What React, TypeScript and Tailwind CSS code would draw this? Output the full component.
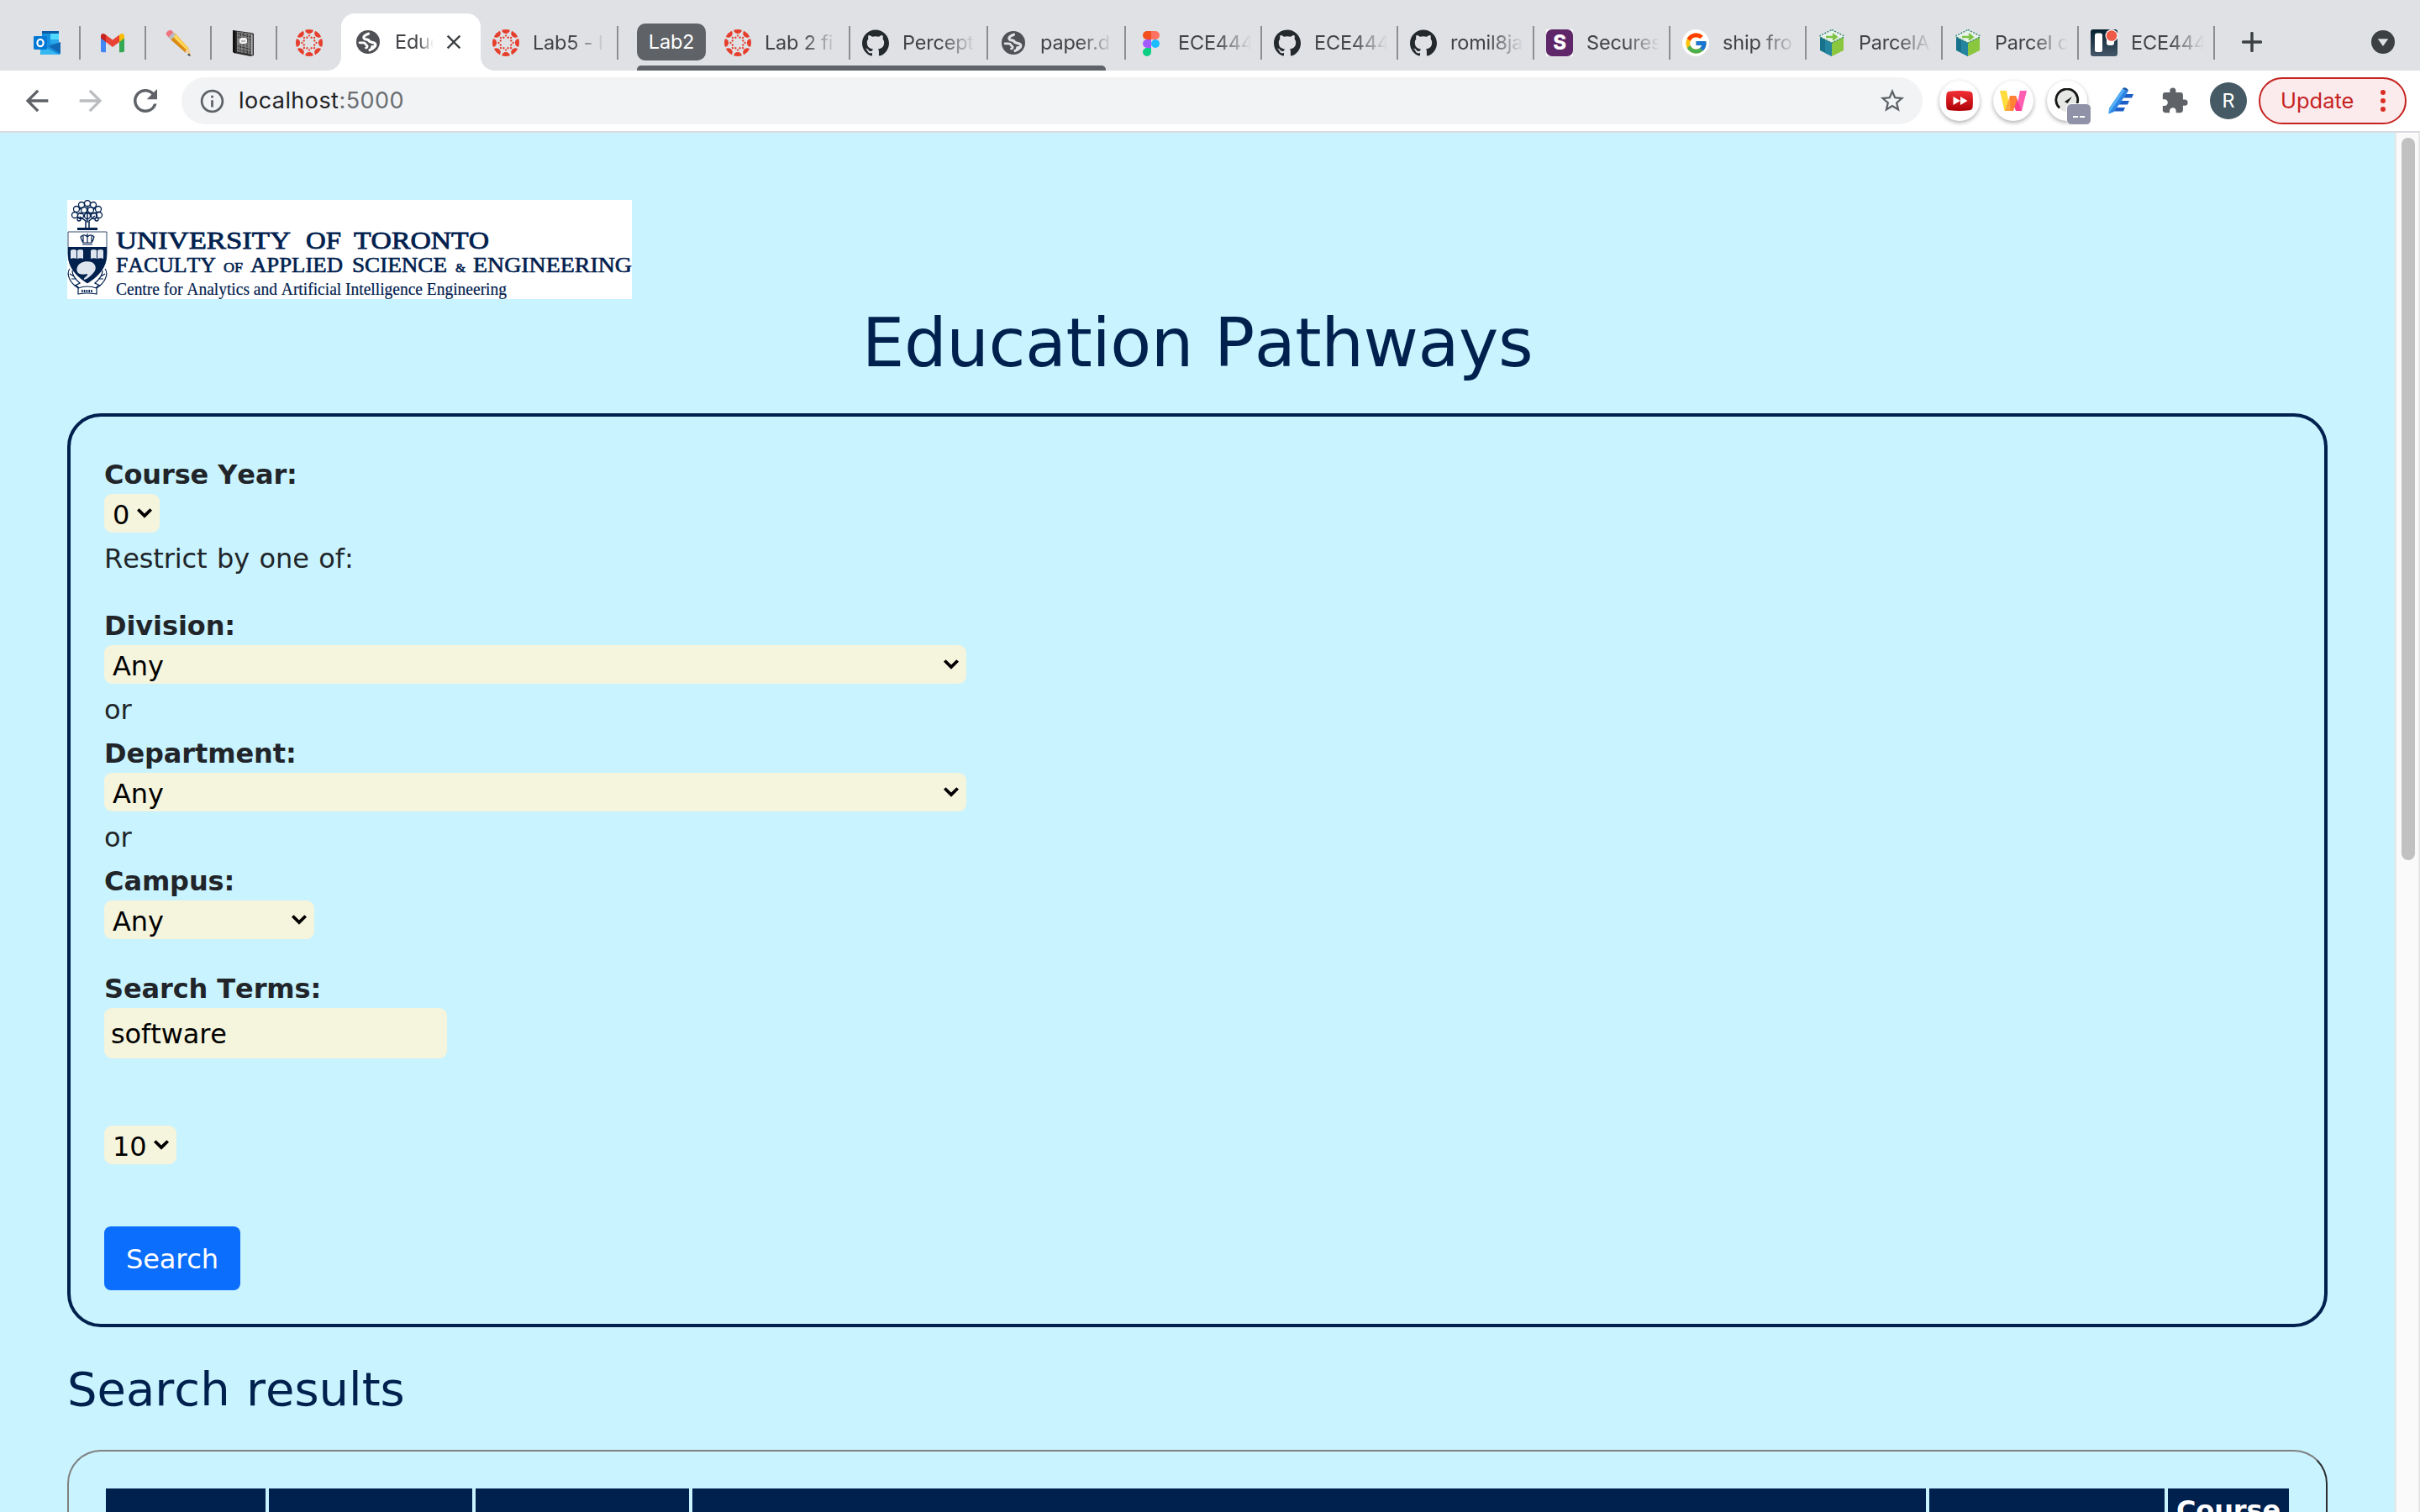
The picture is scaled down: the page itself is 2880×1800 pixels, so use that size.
import React from "react";
import {
  MdArrowBack,
  MdArrowForward,
  MdRefresh,
  MdInfoOutline,
  MdStarOutline,
  MdExtension,
  MdClose,
} from "react-icons/md";
import { SiGithub } from "react-icons/si";
import { FcGoogle } from "react-icons/fc";

const NAVY = "#00204e";

function OutlookIcon() {
  return (
    <svg viewBox="0 0 32 32" className="size-8">
      <rect x="10" y="2" width="20" height="4" fill="#0a5aa8" />
      <rect x="10" y="5" width="10" height="13" fill="#1490df" />
      <rect x="20" y="5" width="10" height="8" fill="#50d9ff" />
      <rect x="20" y="12" width="10" height="8" fill="#28a8ea" />
      <path d="M8 30V17h24v11a2 2 0 0 1-2 2z" fill="#1b8fdb" />
      <path d="M32 15v14L18 20z" fill="#1168b4" />
      <path d="M8 18l22 12H10a2 2 0 0 1-2-2z" fill="#35b8f1" />
      <rect x="0" y="8" width="16" height="16" rx="1.4" fill="#0078d4" />
      <ellipse cx="8" cy="16" rx="3.6" ry="4.2" fill="none" stroke="#fff" strokeWidth="2.2" />
    </svg>
  );
}

function GmailIcon() {
  return (
    <svg viewBox="0 0 32 32" className="size-8">
      <path d="M2 9v16.5A1.8 1.8 0 0 0 3.800 27.300H8V13z" fill="#4285f4" />
      <path d="M24 13v14.300h4.200a1.800 1.800 0 0 0 1.800-1.800V9z" fill="#34a853" />
      <path d="M24 7v8l6-4.500V8c0-3-3-4-5-2.200z" fill="#fbbc04" />
      <path d="M8 15V6.500l8 6 8-6V15l-8 6z" fill="#ea4335" />
      <path d="M2 8v2.500L8 15V6.500L7 5.800C5 4 2 5 2 8z" fill="#c5221f" />
    </svg>
  );
}

function PencilIcon() {
  return (
    <svg viewBox="0 0 32 32" className="size-8">
      <path d="M7 9l5-5 17 19-3 4z" fill="#f5b32a" />
      <path d="M9 8l3-3 16 18-2 1z" fill="#ffd75a" />
      <path d="M5 9l2 3 18 16 1-3L8 7z" fill="#d98b16" />
      <path d="M24 26l5-4 2.500 9.500z" fill="#f3cf9c" />
      <path d="M29 28.500l2 3.500-4-1.500z" fill="#333" />
      <path d="M4.500 9.500l5.500-6 3 3-5.500 6z" fill="#b9bec4" />
      <path d="M1.500 5.500C2 2 5 .5 8 1l2.500 2.500-6 6z" fill="#ee7480" />
    </svg>
  );
}

function NotebookIcon() {
  return (
    <svg viewBox="0 0 32 32" className="size-8">
      <path d="M3 1l22 3 3 1v26l-4 1-20-4z" fill="#2a2a2a" />
      <path d="M8 2.500L26 5v25L8 26.500z" fill="#808080" />
      <path
        d="M9 5l16 4M9 9l16 4M9 20l16 4M9 24l16 4M12 4v23M16 4v24M20 5v24M24 6v23"
        stroke="#303030"
        strokeWidth="1.300"
        strokeDasharray="1.500 1.300"
      />
      <rect x="11" y="10" width="9" height="7" rx="2.500" fill="#f4f4f4" />
      <path d="M13 14h5" stroke="#777" />
      <path d="M3 1v26l3 1.500V2z" fill="#111" />
      <path d="M26 30.500V6" stroke="#ddd" strokeWidth="1" />
    </svg>
  );
}

const CANVAS_ANGLES = [0, 45, 90, 135, 180, 225, 270, 315];

function CanvasIcon() {
  return (
    <svg viewBox="0 0 32 32" className="size-8">
      {CANVAS_ANGLES.map((a) => (
        <g key={a} transform={`rotate(${a} 16 16)`} fill="#e63e2c">
          <path d="M11.200 .8a16 16 0 0 1 9.600 0a4.800 4.300 0 0 1-9.600 0z" />
          <circle cx="16" cy="7.400" r="1.150" />
        </g>
      ))}
      {CANVAS_ANGLES.map((a) => (
        <circle key={a} cx="16" cy="9.200" r="1.200" fill="#e63e2c" transform={`rotate(${a + 22.5} 16 16)`} />
      ))}
    </svg>
  );
}

function GlobeIcon({ hole }: { hole: string }) {
  return (
    <svg viewBox="0 0 32 32" className="size-8">
      <circle cx="16" cy="16" r="14" fill="#505156" />
      <g fill="none" stroke={hole} strokeLinecap="round" strokeLinejoin="round">
        <path d="M16.500 6.200C13 7.500 9.500 9.500 11.500 12c1.200 1.300 3.500.6 5 1.800" strokeWidth="3.200" />
        <path d="M16.500 13.800c.8 2.400 3.800 2.500 6.500 3.200 2 .8 2.500 2.500 1 4.500-1.500 1.800-3.500 3.300-6 4" strokeWidth="3.200" />
        <path d="M6 16.800h4.500c2.600 0 2.300 2.400 4 3.200 1.200.8.800 2.500-1 3" strokeWidth="2.800" />
      </g>
      <path d="M18 26.500l1.500-6 5-1-1.500 4.500z" fill={hole} />
    </svg>
  );
}

function FigmaIcon() {
  return (
    <svg viewBox="0 0 32 32" className="size-8">
      <path d="M11 2h5v10h-5a5 5 0 0 1 0-10z" fill="#f24e1e" />
      <path d="M16 2h5a5 5 0 0 1 0 10h-5z" fill="#ff7262" />
      <path d="M11 12h5v10h-5a5 5 0 0 1 0-10z" fill="#a259ff" />
      <circle cx="21" cy="17" r="5" fill="#1abcfe" />
      <path d="M11 22h5v5a5 5 0 1 1-5-5z" fill="#0acf83" />
    </svg>
  );
}

function GithubIcon() {
  return <SiGithub className="size-8 text-[#24292e]" />;
}

function SecureIcon() {
  return (
    <span className="flex size-8 bg-white">
      <span className="flex size-8 items-center justify-center rounded-[7px] bg-[#5f2769] font-['Inter'] text-[24px] font-extrabold leading-none text-white">
        S
      </span>
    </span>
  );
}

function GoogleIcon() {
  return (
    <span className="flex size-8 items-center justify-center rounded-full bg-white">
      <FcGoogle className="size-[29px]" />
    </span>
  );
}

function ParcelIcon() {
  return (
    <svg viewBox="0 0 32 32" className="size-8">
      <path d="M2 8l14 7v17L2 25z" fill="#17728c" />
      <path d="M8 11l8 4v17l-8-4z" fill="#2584a0" />
      <path d="M30 8l-14 7v17l14-7z" fill="#8bc63f" />
      <path d="M16 .5L30 7.500v1.500L16 16 2 9V7.500z" fill="#e9f2ea" stroke="#2b7f6d" strokeWidth="1.300" strokeDasharray="2 1.500" />
      <path d="M9 9h11M17 5.500l4.500 3.500-4.500 3.500" stroke="#7cc242" strokeWidth="2.400" fill="none" />
    </svg>
  );
}

function TrelloIcon() {
  return (
    <svg viewBox="0 0 32 32" className="size-8">
      <defs>
        <linearGradient id="board" x1="0" y1="0" x2="0" y2="1">
          <stop offset="0" stopColor="#06202f" />
          <stop offset="1" stopColor="#44586a" />
        </linearGradient>
      </defs>
      <rect width="32" height="32" rx="3" fill="url(#board)" />
      <rect x="5" y="4.500" width="9" height="22.500" rx="2.500" fill="#fff" />
      <rect x="19" y="6" width="9" height="13" rx="3" fill="#fff" />
      <circle cx="25" cy="7.500" r="7.500" fill="#fff" />
      <circle cx="25" cy="7.500" r="6.300" fill="#ee5a45" />
    </svg>
  );
}

function Chevron() {
  return (
    <svg viewBox="0 0 20 14" className="h-[14px] w-5">
      <path d="M2.300 2.500L10 10l7.700-7.500" fill="none" stroke="#000" strokeWidth="3.800" />
    </svg>
  );
}

function PinnedTab({ children }: { children: React.ReactNode }) {
  return (
    <div className="flex h-10 w-[78px] items-center border-r-2 border-[#8c8e92] pl-[22px]">{children}</div>
  );
}

type TabProps = {
  icon: React.ReactNode;
  title: string;
  className: string;
};

function Tab({ icon, title, className }: TabProps) {
  return (
    <div className={`flex h-10 items-center ${className}`}>
      <span className="shrink-0">{icon}</span>
      <span className="ml-4 w-[87px] shrink-0 overflow-hidden whitespace-nowrap [mask-image:linear-gradient(to_right,black_52%,transparent)]">
        {title}
      </span>
    </div>
  );
}

function TabStrip() {
  return (
    <div className="flex h-[84px] bg-[#dfe1e5] font-['Inter'] text-[23.5px] leading-8 tracking-[-0.2px] text-[#414347]">
      <div className="flex h-full pt-[31px]">
        <div className="flex h-10 w-[96px] items-center border-r-2 border-[#8c8e92] pl-10">
          <OutlookIcon />
        </div>
        <PinnedTab><GmailIcon /></PinnedTab>
        <PinnedTab><PencilIcon /></PinnedTab>
        <PinnedTab><NotebookIcon /></PinnedTab>
        <div className="flex h-10 w-[76px] items-center pl-[22px]">
          <CanvasIcon />
        </div>
      </div>
      <div className="relative mt-4 flex h-[68px] w-[166px] items-center rounded-t-[16px] bg-white pl-4">
        <span className="absolute bottom-0 -left-4 size-4 bg-[radial-gradient(circle_at_0_0,transparent_15.5px,white_16px)]" />
        <span className="absolute bottom-0 -right-4 size-4 bg-[radial-gradient(circle_at_100%_0,transparent_15.5px,white_16px)]" />
        <GlobeIcon hole="#ffffff" />
        <span className="ml-4 w-[46px] overflow-hidden whitespace-nowrap [mask-image:linear-gradient(to_right,black_60%,transparent)]">
          Educ
        </span>
        <MdClose className="ml-[10px] size-[28px] text-[#3c4043]" />
      </div>
      <div className="flex pt-[31px]">
        <Tab icon={<CanvasIcon />} title="Lab5 - I" className="w-[164px] border-r-2 border-[#8c8e92] pl-[14px]" />
      </div>
      <div className="ml-[22px] flex w-[558px] flex-col justify-between pt-7">
        <div className="flex h-11">
          <span className="flex h-11 w-[82px] items-center justify-center rounded-[10px] bg-[#5f6368] text-white">Lab2</span>
          <div className="mt-[3px] flex">
            <Tab icon={<CanvasIcon />} title="Lab 2 fi" className="w-[172px] border-r-2 border-[#8c8e92] pl-[22px]" />
            <Tab icon={<GithubIcon />} title="Percept" className="w-[164px] border-r-2 border-[#8c8e92] pl-[14px]" />
            <Tab icon={<GlobeIcon hole="#dfe1e5" />} title="paper.d" className="w-[140px] pl-[14px]" />
          </div>
        </div>
        <div className="h-[6px] rounded-t-[5px] bg-[#5f6368]" />
      </div>
      <div className="flex pt-[31px]">
        <div className="h-10 w-6 border-r-2 border-[#8c8e92]" />
        <Tab icon={<FigmaIcon />} title="ECE444" className="w-[162px] border-r-2 border-[#8c8e92] pl-[14px]" />
        <Tab icon={<GithubIcon />} title="ECE444" className="w-[162px] border-r-2 border-[#8c8e92] pl-[14px]" />
        <Tab icon={<GithubIcon />} title="romil8ja" className="w-[162px] border-r-2 border-[#8c8e92] pl-[14px]" />
        <Tab icon={<SecureIcon />} title="Secures" className="w-[162px] border-r-2 border-[#8c8e92] pl-[14px]" />
        <Tab icon={<GoogleIcon />} title="ship fro" className="w-[162px] border-r-2 border-[#8c8e92] pl-[14px]" />
        <Tab icon={<ParcelIcon />} title="ParcelA" className="w-[162px] border-r-2 border-[#8c8e92] pl-[14px]" />
        <Tab icon={<ParcelIcon />} title="Parcel c" className="w-[162px] border-r-2 border-[#8c8e92] pl-[14px]" />
        <Tab icon={<TrelloIcon />} title="ECE444" className="w-[162px] border-r-2 border-[#8c8e92] pl-[14px]" />
        <svg viewBox="0 0 24 24" className="ml-8 mt-[7px] size-6">
          <path d="M12 1.500v21M1.500 12h21" stroke="#3c4043" strokeWidth="3.400" strokeLinecap="round" />
        </svg>
      </div>
      <svg viewBox="0 0 28 28" className="mt-9 mr-[30px] ml-auto size-7">
        <circle cx="14" cy="14" r="14" fill="#3c4043" />
        <path d="M7.800 10.200h12.400L14 19z" fill="#dfe1e5" />
      </svg>
    </div>
  );
}

function Extension({ children }: { children: React.ReactNode }) {
  return (
    <span className="relative flex size-12 items-center justify-center rounded-full bg-white shadow-[0_2px_5px_rgba(0,0,0,0.32)]">
      {children}
    </span>
  );
}

function Toolbar() {
  return (
    <div className="flex h-[74px] items-center border-b-2 border-[#d9dbdf] bg-white pl-6 font-['Inter']">
      <MdArrowBack className="size-10 text-[#5f6368]" />
      <MdArrowForward className="ml-6 size-10 text-[#bbbdc0]" />
      <MdRefresh className="ml-6 size-[42px] text-[#5f6368]" />
      <div className="ml-[22px] flex h-14 w-[2072px] items-center rounded-full bg-[#f1f3f5] pr-[19px] pl-5">
        <MdInfoOutline className="size-[33px] text-[#5f6368]" />
        <span className="ml-[15px] text-[27px] tracking-[0.45px] text-[#202124]">
          localhost<span className="text-[#6b6e72]">:5000</span>
        </span>
        <MdStarOutline className="ml-auto size-[34px] text-[#5f6368]" />
      </div>
      <div className="ml-5 flex gap-4">
        <Extension>
          <svg viewBox="0 0 32 24" className="h-6 w-8">
            <defs>
              <linearGradient id="red" x1="0" y1="0" x2="0" y2="1">
                <stop offset="0" stopColor="#f22f35" />
                <stop offset="1" stopColor="#ae0006" />
              </linearGradient>
            </defs>
            <path d="M4 .8Q16-.6 28 .8q3.300.4 3.600 3.700.7 7.500 0 15Q31.300 22.800 28 23.200q-12 1.400-24 0Q.7 22.800.4 19.500q-.7-7.500 0-15Q.7 1.200 4 .8z" fill="url(#red)" />
            <path d="M8.500 7l8.500 5-8.500 5zM17 7l8.500 5-8.500 5z" fill="#fff" />
          </svg>
        </Extension>
        <Extension>
          <svg viewBox="0 0 32 24" className="h-6 w-8">
            <path d="M0 0h8l4.500 24H5.500z" fill="#fedc3d" />
            <path d="M24 0h8l-6 24h-7z" fill="#ff5fb0" />
            <path d="M12 6h7l-6 18H6z" fill="#ffa63e" />
            <path d="M12 6h7l7 18h-7z" fill="#ff3d8f" />
            <path d="M12 6h7l1.500 5L16 24h-3.500z" fill="#ff8235" />
          </svg>
        </Extension>
        <Extension>
          <svg viewBox="0 0 30 30" className="size-[30px]">
            <circle cx="15" cy="15" r="13" fill="#e6e8e5" />
            <path d="M6 23.500a13 13 0 1 1 20-3" fill="none" stroke="#161616" strokeWidth="2.800" />
            <path d="M21 10l-5.500 8-3.500-2z" fill="#161616" />
          </svg>
          <span className="absolute top-[27px] left-[23px] flex h-[26px] w-[30px] items-center justify-center gap-[2px] rounded-md border border-white bg-[#9093a8] pt-[6px]">
            <span className="h-[2px] w-[6px] bg-white" />
            <span className="h-[2px] w-[6px] bg-white" />
          </span>
        </Extension>
      </div>
      <svg viewBox="0 0 32 32" className="ml-[24px] size-8">
        <path d="M18 8h13l-2 4.500H17zM14 16h12l-2 4.500H12zM10 24h11l-2 4.500H8z" fill="#1d5fc6" />
        <path d="M18 1.500l6.500 3.500L8 29l-6.500 2.500L2 25z" fill="#2c86e4" />
        <path d="M18 1.500l3 1.500L4.500 27 1.500 31.500 2 25z" fill="#56b0f5" />
        <path d="M18 1.500q2-2 4.500-.5 3 1.500 2 4z" fill="#1552a8" />
      </svg>
      <MdExtension className="ml-[31px] size-[34px] text-[#5f6368]" />
      <span className="ml-[25px] flex size-[44px] items-center justify-center rounded-full bg-[#455a64] font-['Roboto'] text-[24px] text-white">R</span>
      <div className="ml-[14px] flex h-14 w-[176px] items-center rounded-full border-2 border-[#c5221f] bg-[#fbebed] pl-6 text-[#c5221f]">
        <span className="text-[25.5px]">Update</span>
        <svg viewBox="0 0 6 26" className="ml-auto mr-[23px] h-[26px] w-[6px] fill-[#d93025]">
          <circle cx="3" cy="3" r="3" />
          <circle cx="3" cy="13" r="3" />
          <circle cx="3" cy="23" r="3" />
        </svg>
      </div>
    </div>
  );
}

function UniversityLogo() {
  return (
    <svg viewBox="0 0 672 118" className="h-[118px] w-[672px] bg-white">
      <g fill="none" stroke={NAVY}>
        <g strokeWidth="1.300">
          <circle cx="24" cy="4" r="3.500" />
          <circle cx="17" cy="6" r="3.500" />
          <circle cx="31" cy="6" r="3.500" />
          <circle cx="11" cy="11" r="3.500" />
          <circle cx="37" cy="11" r="3.500" />
          <circle cx="9" cy="18" r="3.500" />
          <circle cx="38" cy="18" r="3.500" />
          <circle cx="20" cy="12" r="3.500" />
          <circle cx="28" cy="12" r="3.500" />
          <circle cx="16" cy="19" r="3.500" />
          <circle cx="32" cy="19" r="3.500" />
          <circle cx="24" cy="19" r="3.500" />
          <circle cx="14" cy="23" r="2" />
          <circle cx="35" cy="23" r="2" />
          <path d="M14 8l3 4M34 8l-3 4M24 8v3M14 15l3 2M35 15l-4 1M24 14l-3 3M26 15l3 2" />
        </g>
        <path d="M22 33V25l-7-5M26 33V25l7-6M24 27V14" strokeWidth="1.500" />
        <path d="M12 34.500h24" strokeWidth="3" />
        <path d="M1 38h46v26C47 82 35 92 24 99 13 92 1 82 1 64z" strokeWidth="0.800" />
      </g>
      <path d="M1 56h46v9c0 17-12 27-23 34C13 92 1 82 1 65z" fill={NAVY} />
      <g fill="none" stroke={NAVY} strokeWidth="1.200">
        <path d="M16 44q4-4 8 0 4-4 8 0-1 4-3 7H19q-2-3-3-7zM24 40v11M19 43v8M29 43v8M18 53h12" />
      </g>
      <g fill="#dfe5ee">
        <path d="M4 60q4-2 7 0v10q-3-1.500-7 0zM12 60q4-2 7 0v10q-3-1.500-7 0zM28 60q4-2 7 0v10q-3-1.500-7 0zM36 60q4-2 7 0v10q-3-1.500-7 0z" />
        <path d="M12 80c2-6 10-8 17-6 6 3 6 9 2 13-3 3-6 7-11 8-1-3 5-4 4-7-4 1-9 1-11-1-2-2-2-5-1-7z" />
      </g>
      <g fill="none" stroke={NAVY} strokeWidth="1.200">
        <path d="M3 82c-4 5-1 14 6 20l6-3c-6-5-9-10-9-15M45 82c4 5 1 14-6 20l-6-3c6-5 9-10 9-15M3 88l5 3M5 94l6 0M45 88l-5 3M43 94l-6 0M11 102l3 3M37 102l-3 3" />
        <path d="M13 105q11-4 22 0v7q-11-2-22 0zM13 105l-4-3M35 105l4-3" />
        <path d="M17 108.500h14" strokeWidth="3" strokeDasharray="1.600 1.200" />
      </g>
      <g fill={NAVY} fontFamily="'Liberation Serif', serif">
        <text x="58" y="58" fontSize="30" textLength="208" lengthAdjust="spacingAndGlyphs" stroke={NAVY} strokeWidth="0.8">UNIVERSITY</text>
        <text x="284" y="58" fontSize="30" textLength="42" lengthAdjust="spacingAndGlyphs" stroke={NAVY} strokeWidth="0.8">OF</text>
        <text x="341" y="58" fontSize="30" textLength="161" lengthAdjust="spacingAndGlyphs" stroke={NAVY} strokeWidth="0.8">TORONTO</text>
        <g stroke={NAVY} strokeWidth="0.600">
          <text x="58" y="86" fontSize="25" textLength="119" lengthAdjust="spacingAndGlyphs">FACULTY</text>
          <text x="186" y="86" fontSize="17" textLength="23" lengthAdjust="spacingAndGlyphs">OF</text>
          <text x="218" y="86" fontSize="25" textLength="110" lengthAdjust="spacingAndGlyphs">APPLIED</text>
          <text x="339" y="86" fontSize="25" textLength="113" lengthAdjust="spacingAndGlyphs">SCIENCE</text>
          <text x="462" y="86" fontSize="15" textLength="12" lengthAdjust="spacingAndGlyphs">&amp;</text>
          <text x="483" y="86" fontSize="25" textLength="189" lengthAdjust="spacingAndGlyphs">ENGINEERING</text>
        </g>
        <text x="58" y="113" fontSize="21.500" textLength="465" lengthAdjust="spacingAndGlyphs" stroke={NAVY} strokeWidth="0.200">
          Centre for Analytics and Artificial Intelligence Engineering
        </text>
      </g>
    </svg>
  );
}

function SelectBox({ value, className }: { value: string; className: string }) {
  return (
    <div className={`flex h-[46px] items-center justify-between rounded-[9px] bg-[#f5f4dc] pr-2 pl-[10px] text-black ${className}`}>
      <span className="pt-[3px] leading-10">{value}</span>
      <Chevron />
    </div>
  );
}

function Label({ children, className }: { children: React.ReactNode; className: string }) {
  return <div className={`font-bold tracking-[-0.1px] ${className}`}>{children}</div>;
}

function SearchForm() {
  return (
    <form className="mt-[44px] h-[1088px] rounded-[40px] border-4 border-[#00204e] px-10 pt-[49px] text-[32px] leading-10 tracking-[-0.1px] text-[#212529]">
      <Label className="">Course Year:</Label>
      <SelectBox value="0" className="mt-[3px] w-[66px]" />
      <div className="mt-[11px] [word-spacing:1.4px]">Restrict by one of:</div>
      <Label className="mt-10">Division:</Label>
      <SelectBox value="Any" className="mt-[3px] w-[1026px]" />
      <div className="mt-[11px]">or</div>
      <Label className="mt-3">Department:</Label>
      <SelectBox value="Any" className="mt-[3px] w-[1026px]" />
      <div className="mt-[11px]">or</div>
      <Label className="mt-3">Campus:</Label>
      <SelectBox value="Any" className="mt-[3px] w-[250px]" />
      <Label className="mt-[39px]">Search Terms:</Label>
      <div className="mt-[3px] flex h-[60px] w-[408px] items-center rounded-[9px] bg-[#f5f4dc] pt-[1px] pl-2 text-black">software</div>
      <SelectBox value="10" className="mt-20 w-[86px]" />
      <button type="button" className="mt-[74px] flex h-[76px] w-[162px] items-center justify-center rounded-lg bg-[#0b6efd] pt-[1px] text-white">
        Search
      </button>
    </form>
  );
}

function ResultsTable() {
  return (
    <div className="mt-[43px] h-[400px] rounded-[40px] border-2 border-[#2c2c2c] border-t-[#808080] border-l-[#808080] px-11 pt-11">
      <div className="grid h-[300px] grid-cols-[190px_242px_254px_1468px_280px_144px] gap-1 text-center text-[32px] font-bold leading-12 text-white *:bg-[#00204e]">
        <div />
        <div />
        <div />
        <div />
        <div />
        <div className="pt-[2px] tracking-[-0.1px]">Course</div>
      </div>
    </div>
  );
}

export default function App() {
  return (
    <div className="flex h-[1800px] w-[2880px] flex-col overflow-hidden">
      <TabStrip />
      <Toolbar />
      <div className="flex min-h-0 flex-1">
        <main className="w-[2850px] overflow-hidden bg-[#c8f3ff] pt-20 pr-20 pl-20 font-['DejaVu_Sans',sans-serif] [font-kerning:none]">
          <UniversityLogo />
          <h1 className="mt-[13px] text-center text-[80px] leading-[80px] tracking-[-0.45px] text-[#00204e]">Education Pathways</h1>
          <div className="-mt-px">
            <SearchForm />
          </div>
          <h2 className="mt-[46px] text-[56px] leading-[56px] text-[#00204e] [word-spacing:1.5px]">Search results</h2>
          <div className="pt-px">
            <ResultsTable />
          </div>
        </main>
        <div className="w-[30px] border-r-2 border-l-2 border-[#e8e8e8] bg-[#fafafa] px-[6px] pt-[6px]">
          <div className="h-[860px] w-4 rounded-full bg-[#c1c1c1]" />
        </div>
      </div>
    </div>
  );
}
